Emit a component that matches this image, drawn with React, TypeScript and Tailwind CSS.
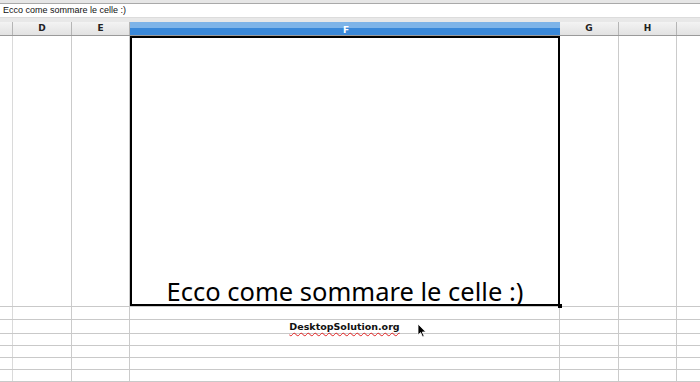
import React from 'react'

const cols = 'grid grid-cols-[13px_59px_58px_430px_59px_58px_1fr]'

const smallRows = [13, 14, 12, 12, 12, 12, 12]

function Cursor() {
  return (
    <svg width="10" height="15" viewBox="0 0 10 15" className="absolute left-[417px] top-[323px]">
      <path d="M1 1 L1 12 L3.6 9.6 L5.6 14 L7.2 13.3 L5.3 9 L8.8 9 Z" fill="#000" stroke="#fff" strokeWidth="0.8" />
    </svg>
  )
}

export default function App() {
  return (
    <div className="relative w-[700px] h-[382px] overflow-hidden bg-white font-['DejaVu_Sans',sans-serif]">
      {/* top toolbar remains */}
      <div className="h-[4px] bg-[#e6e6e6] border-b border-[#a9a9a9]" />

      {/* formula bar */}
      <div className="h-[13px] bg-white flex items-center px-[3px] text-[9px] leading-none text-[#111] font-['Liberation_Sans',sans-serif]">
        Ecco come sommare le celle :)
      </div>
      <div className="h-[5px] bg-[#e8e8e8] border-t border-[#dcdcdc]" />

      {/* column headers */}
      <div className={`${cols} h-[14px] border-b border-[#9a9a9a] text-[9px] font-bold leading-none text-[#222]`}>
        <div className="bg-gradient-to-b from-[#f3f3f3] to-[#e2e2e2] border-r border-[#b5b5b5]" />
        <div className="bg-gradient-to-b from-[#f3f3f3] to-[#e2e2e2] border-r border-[#b5b5b5] flex items-center justify-center">D</div>
        <div className="bg-gradient-to-b from-[#f3f3f3] to-[#e2e2e2] border-r border-[#b5b5b5] flex items-center justify-center">E</div>
        <div className="flex flex-col">
          <div className="h-[6px] bg-[#7eb4e8]" />
          <div className="flex-1 bg-[#3a88d8]" />
          <div className="absolute left-[343px] top-[26px] text-white">F</div>
        </div>
        <div className="bg-gradient-to-b from-[#f3f3f3] to-[#e2e2e2] border-r border-[#b5b5b5] flex items-center justify-center">G</div>
        <div className="bg-gradient-to-b from-[#f3f3f3] to-[#e2e2e2] border-r border-[#b5b5b5] flex items-center justify-center">H</div>
        <div className="bg-gradient-to-b from-[#f3f3f3] to-[#e2e2e2]" />
      </div>

      {/* tall row with the enlarged cell */}
      <div className={`${cols} h-[270px]`}>
        <div className="border-r border-[#dadada]" />
        <div className="border-r border-[#cbcbcb]" />
        <div className="border-r border-[#cbcbcb]" />
        <div className="relative border-2 border-black flex items-end justify-center">
          <span className="text-[25.5px] leading-none pb-0 text-black font-['Noto_Sans',sans-serif]">
            Ecco come sommare le celle :)
          </span>
          <div className="absolute -right-[4px] -bottom-[4px] w-[4px] h-[4px] bg-black" />
        </div>
        <div className="border-r border-[#cbcbcb]" />
        <div className="border-r border-[#cbcbcb]" />
        <div />
      </div>

      {/* ordinary rows */}
      {smallRows.map((h, i) => (
        <div key={i} className={`${cols} border-t border-[#c9c9c9]`} style={{ height: h }}>
          <div className="border-r border-[#dadada]" />
          <div className="border-r border-[#cbcbcb]" />
          <div className="border-r border-[#cbcbcb]" />
          <div className="border-r border-[#cbcbcb] flex items-center justify-center">
            {i === 1 && (
              <span className="text-[9.5px] font-bold text-[#111] leading-none underline decoration-wavy decoration-[#e02020] decoration-1 underline-offset-2 font-['DejaVu_Sans',sans-serif]">
                DesktopSolution.org
              </span>
            )}
          </div>
          <div className="border-r border-[#cbcbcb]" />
          <div className="border-r border-[#cbcbcb]" />
          <div />
        </div>
      ))}

      <Cursor />
    </div>
  )
}
